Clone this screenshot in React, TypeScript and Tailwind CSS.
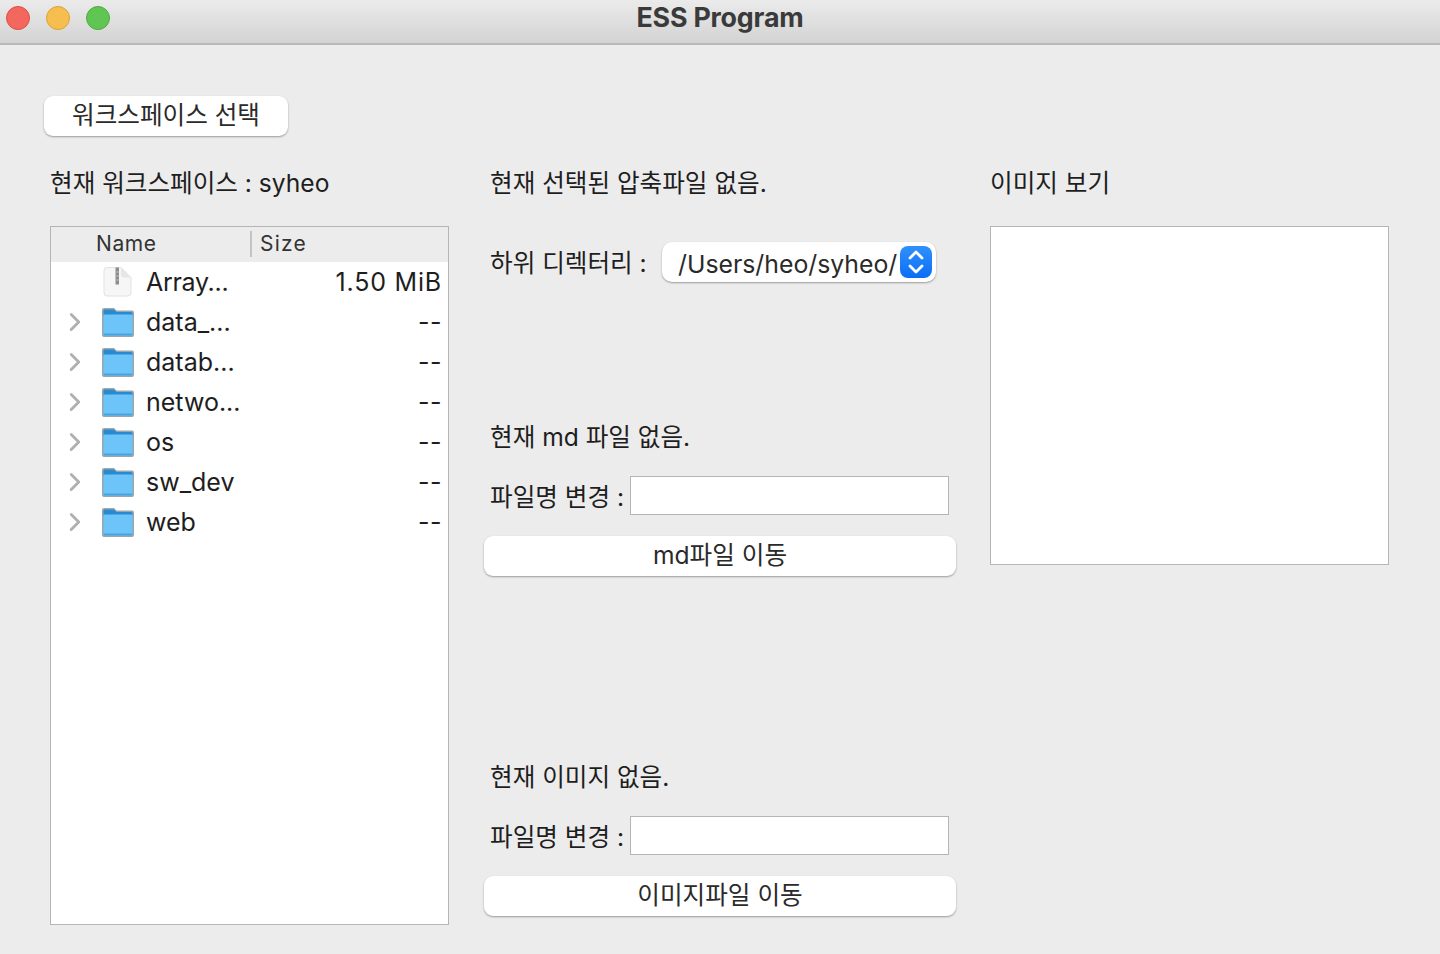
import { ChevronRight } from "lucide-react";

const font = "font-['Inter','Noto_Sans_CJK_KR',sans-serif]";

const rows = ["data_...", "datab...", "netwo...", "os", "sw_dev", "web"];

function FolderIcon() {
  return (
    <svg width="34" height="32" viewBox="0 0 34 32" className="shrink-0 -mt-[2px]">
      <path d="M1 4a2 2 0 0 1 2-2h10l2.500 2.500H31a2 2 0 0 1 2 2V29a2 2 0 0 1-2 2H3a2 2 0 0 1-2-2z" fill="#98a6af" />
      <path d="M2.500 5a1.500 1.500 0 0 1 1.500-1.500h9l2.500 2.500H30a1.500 1.500 0 0 1 1.500 1.500V10h-29z" fill="#2a8ad0" />
      <rect x="2.500" y="8.500" width="29" height="21" rx="1" fill="#6dc4f9" />
      <rect x="2.500" y="27.500" width="29" height="2" rx="1" fill="#4aa3df" />
    </svg>
  );
}

function FileIcon() {
  return (
    <svg width="30" height="32" viewBox="0 0 30 32" className="shrink-0 ml-[2px] mr-[2px] -mt-[2px]">
      <path d="M4 1.500h14l10 10V27a3 3 0 0 1-3 3H4a3 3 0 0 1-3-3V4.500a3 3 0 0 1 3-3z" fill="#f6f6f6" stroke="#e2e2e2" />
      <path d="M18 1.500v7a3 3 0 0 0 3 3h7z" fill="#e6e6e6" />
      <rect x="12.500" y="1.500" width="3.500" height="17" fill="#8c8c8c" />
      <path d="M12.500 6h3.500M12.500 10h3.500M12.500 14h3.500" stroke="#bdbdbd" />
    </svg>
  );
}

function MacButton({ label, className }: { label: string; className: string }) {
  return (
    <button className={`h-10 pb-[2px] bg-white rounded-[9px] text-[24.6px] leading-none text-[#2a2a2a] shadow-[0_1px_2px_rgba(0,0,0,0.35)] ${className}`}>
      {label}
    </button>
  );
}

function RenameField() {
  return (
    <div className="flex items-start pl-1.5 h-10">
      <span className="h-10 pt-[2px] flex items-center text-[24.6px] text-[#1e1e1e] whitespace-nowrap w-[140px]">파일명 변경 :</span>
      <div className="w-[319px] h-[39px] bg-white border border-[#b5b5b5]" />
    </div>
  );
}

export default function App() {
  return (
    <div className={`w-[1440px] h-[954px] overflow-hidden bg-[#ececec] ${font}`}>
      {/* Title bar */}
      <div className="relative h-[45px] border-b-2 border-[#b8b8b8] bg-gradient-to-b from-[#ebebeb] to-[#d3d3d3] flex items-center justify-center">
        <div className="absolute left-[6px] top-[6px] flex gap-[16px]">
          <div className="w-6 h-6 rounded-full bg-[#f4675e] border border-[#dc4f47]" />
          <div className="w-6 h-6 rounded-full bg-[#f6be4f] border border-[#dea136]" />
          <div className="w-6 h-6 rounded-full bg-[#61c554] border border-[#4dac40]" />
        </div>
        <span className="text-[26.800px] font-bold tracking-[-0.2px] text-[#3a3a3a] -mt-[9px]">ESS Program</span>
      </div>

      <div className="pl-11 pt-[51px]">
        <MacButton label="워크스페이스 선택" className="w-[244px]" />

        <div className="flex mt-[26px]">
          {/* Tree */}
          <div className="w-[440px] pl-1.5">
            <div className="h-[40px] pt-[2px] flex items-center text-[24.6px] text-[#1e1e1e] whitespace-nowrap">현재 워크스페이스 : syheo</div>
            <div className="mt-[24px] w-[399px] h-[699px] bg-white border border-[#b5b5b5]">
              <div className="h-[35px] pb-[2px] bg-[#ececec] flex items-center text-[21px] tracking-[0.6px] text-[#333]">
                <span className="pl-[45px] w-[199px]">Name</span>
                <span className="h-[26px] border-l-2 border-[#c4c4c4] pl-2 leading-[26px] tracking-[1.2px]">Size</span>
              </div>
              <div className="flex items-center h-10 pr-[6px] pt-[2px] text-[25px] text-[#1e1e1e]">
                <span className="w-[50px]" />
                <FileIcon />
                <span className="ml-[11px] flex-1 tracking-[-0.3px]">Array...</span>
                <span className="tracking-[0.8px]">1.50 MiB</span>
              </div>
              {rows.map((row) => (
                <div key={row} className="flex items-center h-10 pr-[6px] pt-[2px] text-[25px] text-[#1e1e1e]">
                  <span className="w-[50px] pl-[9px]">
                    <ChevronRight size={30} strokeWidth={2.3} className="text-[#b0b0b0] -mt-[3px]" />
                  </span>
                  <FolderIcon />
                  <span className="ml-[11px] flex-1">{row}</span>
                  <span className="tracking-[0.5px]">--</span>
                </div>
              ))}
            </div>
          </div>

          {/* Middle */}
          <div className="w-[472px] flex flex-col">
            <div className="pl-1.5 h-[40px] pt-[2px] flex items-center text-[24.6px] text-[#1e1e1e] whitespace-nowrap">현재 선택된 압축파일 없음.</div>
            <div className="pl-1.5 mt-[40px] flex items-center h-10">
              <span className="pt-[2px] text-[24.6px] text-[#1e1e1e] whitespace-nowrap w-[172px]">하위 디렉터리 :</span>
              <div className="w-[274px] h-10 bg-white rounded-[10px] shadow-[0_1px_2px_rgba(0,0,0,0.35)] flex items-center justify-between pl-4 pr-[4px]">
                <span className="pt-[6px] text-[24.800px] whitespace-nowrap text-[#2a2a2a]">/Users/heo/syheo/</span>
                <span className="shrink-0 w-[32px] h-[32px] rounded-[8px] bg-gradient-to-b from-[#2f90fc] to-[#0a6ef5] flex items-center justify-center">
                  <svg width="20" height="28" viewBox="0 0 20 28" fill="none" stroke="white" strokeWidth="2.800" strokeLinecap="round" strokeLinejoin="round">
                    <path d="M4 10l6-6 6 6M4 18l6 6 6-6" />
                  </svg>
                </span>
              </div>
            </div>

            <div className="pl-1.5 mt-[134px] h-[40px] pt-[2px] flex items-center text-[24.6px] text-[#1e1e1e] whitespace-nowrap">현재 md 파일 없음.</div>
            <div className="mt-[20px]"><RenameField /></div>
            <MacButton label="md파일 이동" className="w-full mt-5" />

            <div className="pl-1.5 mt-[180px] h-[40px] pt-[2px] flex items-center text-[24.6px] text-[#1e1e1e] whitespace-nowrap">현재 이미지 없음.</div>
            <div className="mt-[20px]"><RenameField /></div>
            <MacButton label="이미지파일 이동" className="w-full mt-5" />
          </div>

          {/* Image */}
          <div className="ml-[34px]">
            <div className="h-[40px] pt-[2px] flex items-center text-[24.6px] text-[#1e1e1e] whitespace-nowrap">이미지 보기</div>
            <div className="mt-[24px] w-[399px] h-[339px] bg-white border border-[#b5b5b5]" />
          </div>
        </div>
      </div>
    </div>
  );
}
